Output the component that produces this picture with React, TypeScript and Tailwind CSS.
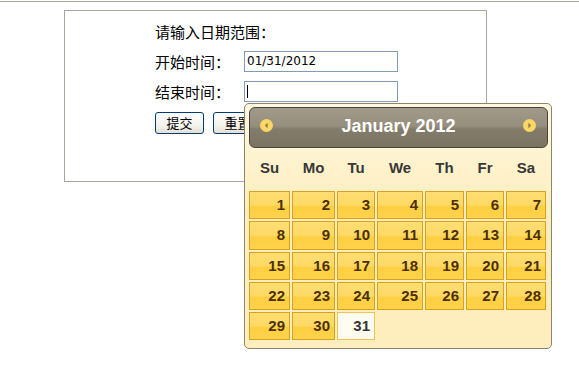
import React from "react";

const widths = "grid-cols-[41px_43px_38px_46px_39px_38px_40px]";
const dayNames = ["Su", "Mo", "Tu", "We", "Th", "Fr", "Sa"];

function NavIcon({ dir }: { dir: "prev" | "next" }) {
  return (
    <svg width="13" height="13" viewBox="0 0 13 13">
      <circle cx="6.5" cy="6.5" r="6.5" fill="#f9d765" />
      {dir === "prev" ? (
        <polygon points="7.6,3.8 7.6,9.2 4.9,6.5" fill="#8a7848" />
      ) : (
        <polygon points="5.4,3.8 5.4,9.2 8.1,6.5" fill="#8a7848" />
      )}
    </svg>
  );
}

export default function App() {
  const cells: number[] = [];
  for (let d = 1; d <= 31; d++) cells.push(d);

  return (
    <div className="relative w-full min-h-[375px] bg-white font-['Noto_Sans_CJK_SC',sans-serif] text-black">
      <div className="h-[1px] mt-[1px] bg-[#aca899]" />
      <div className="ml-[64px] mt-[8px] w-[423px] h-[172px] border border-[#aca899] pl-[90px] pt-[11px]">
        <div className="h-[20px] text-[15px] leading-[20px]">请输入日期范围：</div>
        <div className="flex items-center h-[21px] mt-[9px]">
          <span className="w-[89px] text-[15px] leading-[21px]">开始时间：</span>
          <div className="w-[154px] h-[21px] border border-[#7f9db9] bg-white pl-[2px] text-[12px] leading-[19px] font-['DejaVu_Sans',sans-serif]">
            01/31/2012
          </div>
        </div>
        <div className="flex items-center h-[21px] mt-[9px]">
          <span className="w-[89px] text-[15px] leading-[21px]">结束时间：</span>
          <div className="w-[154px] h-[21px] border border-[#7f9db9] bg-white pl-[2px] flex items-center">
            <span className="inline-block w-[1px] h-[13px] bg-black" />
          </div>
        </div>
        <div className="flex mt-[10px]">
          <button className="w-[49px] h-[22px] border border-[#003c74] rounded-[3px] bg-[linear-gradient(to_bottom,#ffffff_0%,#f4f3ee_60%,#e3e0d2_100%)] text-[13px] leading-[20px]">
            提交
          </button>
          <button className="ml-[9px] w-[49px] h-[22px] border border-[#003c74] rounded-[3px] bg-[linear-gradient(to_bottom,#ffffff_0%,#f4f3ee_60%,#e3e0d2_100%)] text-[13px] leading-[20px]">
            重置
          </button>
        </div>
      </div>

      <div className="absolute left-[244px] top-[102px] w-[308px] h-[246px] border border-[#8e846b] rounded-[5px] bg-[linear-gradient(to_bottom,#fff8e2_0px,#feeebd_110px)] pt-[3px] pl-[4px] pr-[3px] font-['Liberation_Sans',Arial,sans-serif]">
        <div className="relative h-[41px] border border-[#494437] rounded-[6px] bg-[linear-gradient(to_bottom,#a29a88_0%,#978f7d_46%,#8e8674_50%,#847c6a_54%,#7b7361_100%)] flex items-center justify-center">
          <div className="absolute left-[10px] top-[11px] flex">
            <NavIcon dir="prev" />
          </div>
          <span className="text-white font-bold text-[18px] leading-[22px] mb-[3px]">January 2012</span>
          <div className="absolute right-[11px] top-[11px] flex">
            <NavIcon dir="next" />
          </div>
        </div>
        <div className={`grid ${widths} gap-x-[2px] h-[39px] items-center`}>
          {dayNames.map((n) => (
            <div key={n} className="text-center text-[15px] font-bold text-[#383838] leading-[18px]">
              {n}
            </div>
          ))}
        </div>
        <div className={`grid ${widths} gap-x-[2px] gap-y-[2px] mt-[4px]`}>
          {cells.map((d) =>
            d === 31 ? (
              <div
                key={d}
                className="h-[28.25px] border border-[#f0c24e] bg-[#fffcf0] text-right pr-[4px] text-[15px] font-bold text-[#363636] leading-[25px]"
              >
                {d}
              </div>
            ) : (
              <div
                key={d}
                className="h-[28.25px] border border-[#d9a11c] bg-[linear-gradient(to_bottom,#fede72_0%,#fed966_50%,#fecf42_56%,#fed24c_100%)] text-right pr-[4px] text-[15px] font-bold text-[#4c3000] leading-[25px]"
              >
                {d}
              </div>
            )
          )}
        </div>
      </div>
    </div>
  );
}
